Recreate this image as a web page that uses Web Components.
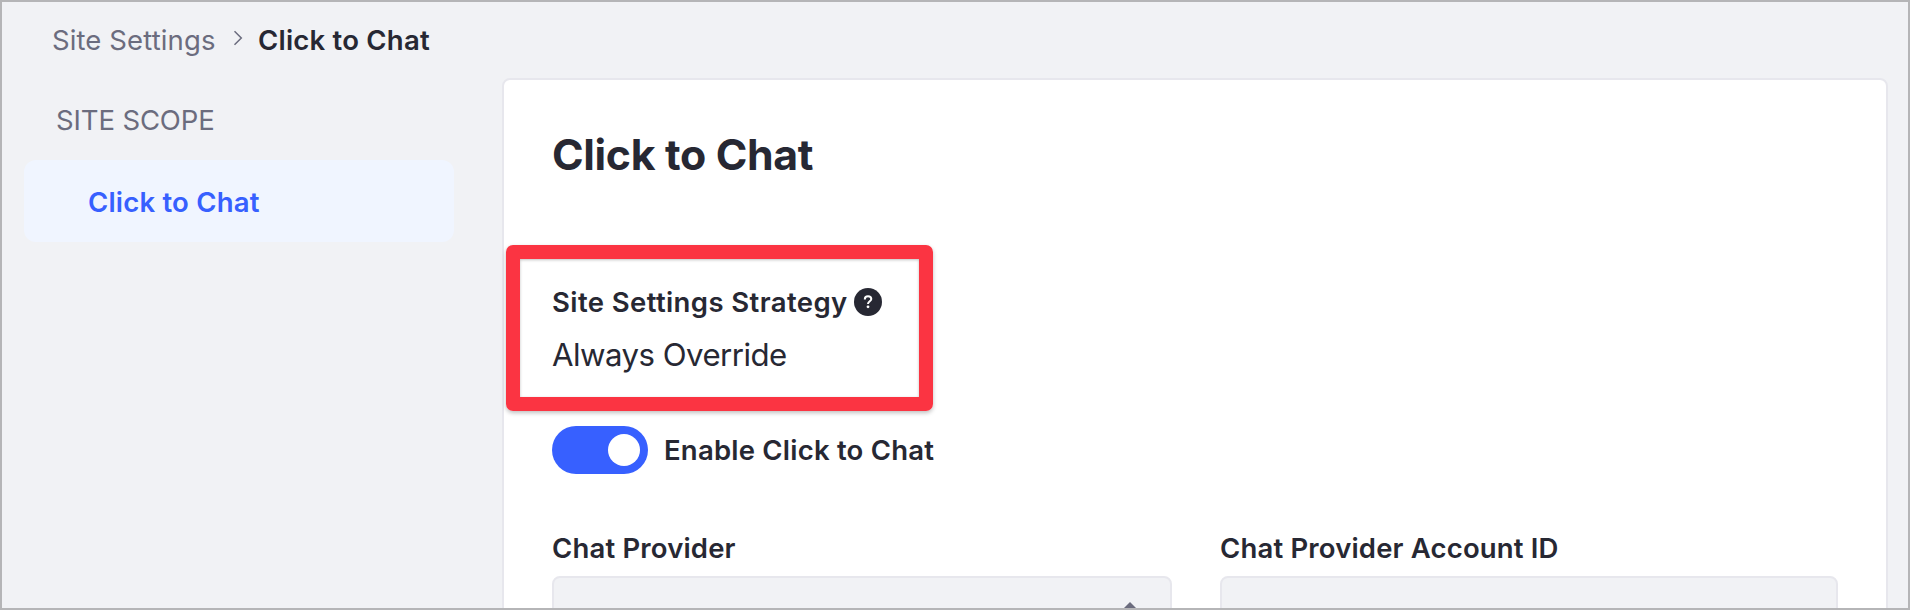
<!DOCTYPE html>
<html lang="en">
<head>
<meta charset="utf-8">
<title>Click to Chat</title>
<style>
html,body{margin:0;height:610px;overflow:hidden;background:#f1f2f5}
body{font-family:Inter,"Liberation Sans",sans-serif;color:#272833}
</style>
</head>
<body>
<settings-page>
  <bread-crumb slot="crumbs" parent="Site Settings" current="Click to Chat"></bread-crumb>
  <scope-nav slot="nav" heading="SITE SCOPE" item="Click to Chat"></scope-nav>
  <settings-sheet heading="Click to Chat">
    <strategy-info label="Site Settings Strategy" value="Always Override"></strategy-info>
    <toggle-switch>Enable Click to Chat</toggle-switch>
    <field-row>
      <form-field arrow>Chat Provider</form-field>
      <form-field>Chat Provider Account ID</form-field>
    </field-row>
  </settings-sheet>
</settings-page>
<script>
const define = (name, html) => customElements.define(name, class extends HTMLElement {
  constructor() {
    super();
    const root = this.attachShadow({ mode: 'open' });
    root.innerHTML = html;
    root.querySelectorAll('[data-attr]').forEach(n => { n.textContent = this.getAttribute(n.dataset.attr); });
  }
});

define('settings-page', `<style>
:host{display:grid;box-sizing:border-box;width:1910px;height:610px;border:2px solid #b5b5b7;background:#f1f2f5;grid-template-columns:500px 1386px;grid-template-rows:76px 1fr;overflow:hidden}
.crumbs{grid-column:1/3}
</style>
<div class="crumbs"><slot name="crumbs"></slot></div><slot name="nav"></slot><slot></slot>`);

define('bread-crumb', `<style>
:host{display:flex;padding:18px 0 0 50px;font-size:27.5px;line-height:40px;color:#6b6c7e;white-space:nowrap}
.parent{width:164px;letter-spacing:.11px}
svg{width:10px;height:16px;margin:10px 15px 0 17px}
b{font-weight:600;color:#272833;letter-spacing:.22px}
</style>
<span class="parent" data-attr="parent"></span>
<svg viewBox="0 0 10 16" fill="none" stroke="#6b6c7e" stroke-width="1.5"><path d="M1.5 1.2 8.3 8 1.5 14.8"/></svg>
<b data-attr="current"></b>`);

define('scope-nav', `<style>
:host{display:block;white-space:nowrap}
.head{padding:22px 0 0 54px;font-size:27.5px;line-height:40px;color:#6b6c7e;letter-spacing:-.13px}
.item{box-sizing:border-box;width:430px;height:82px;margin:20px 0 0 22px;padding:22px 0 0 64px;border-radius:12px;background:#f0f5ff;color:#3760ff;font-size:27.5px;line-height:40px;font-weight:600;letter-spacing:.2px}
</style>
<div class="head" data-attr="heading"></div><div class="item" data-attr="item"></div>`);

define('settings-sheet', `<style>
:host{display:block;box-sizing:border-box;height:600px;border:2px solid #e7e7ed;border-radius:8px;background:#fff;padding:45px 48px 0}
h1{margin:0;font-size:42.8px;line-height:60px;font-weight:700;letter-spacing:-.33px;white-space:nowrap}
</style><h1 data-attr="heading"></h1><slot></slot>`);

define('strategy-info', `<style>
:host{display:block;box-sizing:border-box;width:427px;height:166px;margin:60.4px 0 0 -46px;border:14px solid #fb3442;border-radius:7px;box-shadow:0 2px 4px rgba(0,0,0,.25),inset 0 1px 3px rgba(0,0,0,.25);padding:23px 0 0 32px;white-space:nowrap}
.label{display:flex;align-items:center;height:40px;font-size:27.5px;font-weight:600;letter-spacing:.4px}
.label span{width:302px}
.value{margin-top:9px;font-size:31.2px;line-height:48px;letter-spacing:-.53px}
svg{width:28px;height:28px}
</style>
<div class="label"><span data-attr="label"></span><svg viewBox="0 0 28 28"><circle cx="14" cy="14" r="14" fill="#272833"/><path d="M10.8 11.4C10.8 9.3 12 8.2 14 8.2s3.3 1.1 3.3 2.8c0 2.2-3.3 2.4-3.3 5" fill="none" stroke="#fff" stroke-width="2"/><circle cx="14" cy="18.8" r="1.4" fill="#fff"/></svg></div>
<div class="value" data-attr="value"></div>`);

define('toggle-switch', `<style>
:host{display:flex;align-items:center;gap:16px;margin-top:14.6px;height:48px;font-size:27.5px;font-weight:600;letter-spacing:.22px;white-space:nowrap}
.track{box-sizing:border-box;width:96px;height:48px;padding:8px;border-radius:24px;background:#3760ff;display:flex;justify-content:flex-end}
.track i{width:32px;height:32px;border-radius:50%;background:#fff}
</style><div class="track"><i></i></div><span><slot></slot></span>`);

define('field-row', `<style>
:host{display:grid;grid-template-columns:620px 618px;gap:48px;margin-top:54px}
</style><slot></slot>`);

define('form-field', `<style>
:host{display:block}
.label{font-size:27.5px;line-height:40px;font-weight:600;letter-spacing:.17px;white-space:nowrap}
.box{box-sizing:border-box;height:80px;margin-top:8px;border:2px solid #e7e7ed;border-radius:8px;background:#f1f2f5;display:flex;justify-content:flex-end;padding:24px 30px 0}
svg{display:none;width:20px;height:10px}
:host([arrow]) svg{display:block}
</style><div class="label"><slot></slot></div><div class="box"><svg viewBox="0 0 20 10"><path d="M10 0 20 10H0z" fill="#6b6c7e"/></svg></div>`);
</script>
</body>
</html>
